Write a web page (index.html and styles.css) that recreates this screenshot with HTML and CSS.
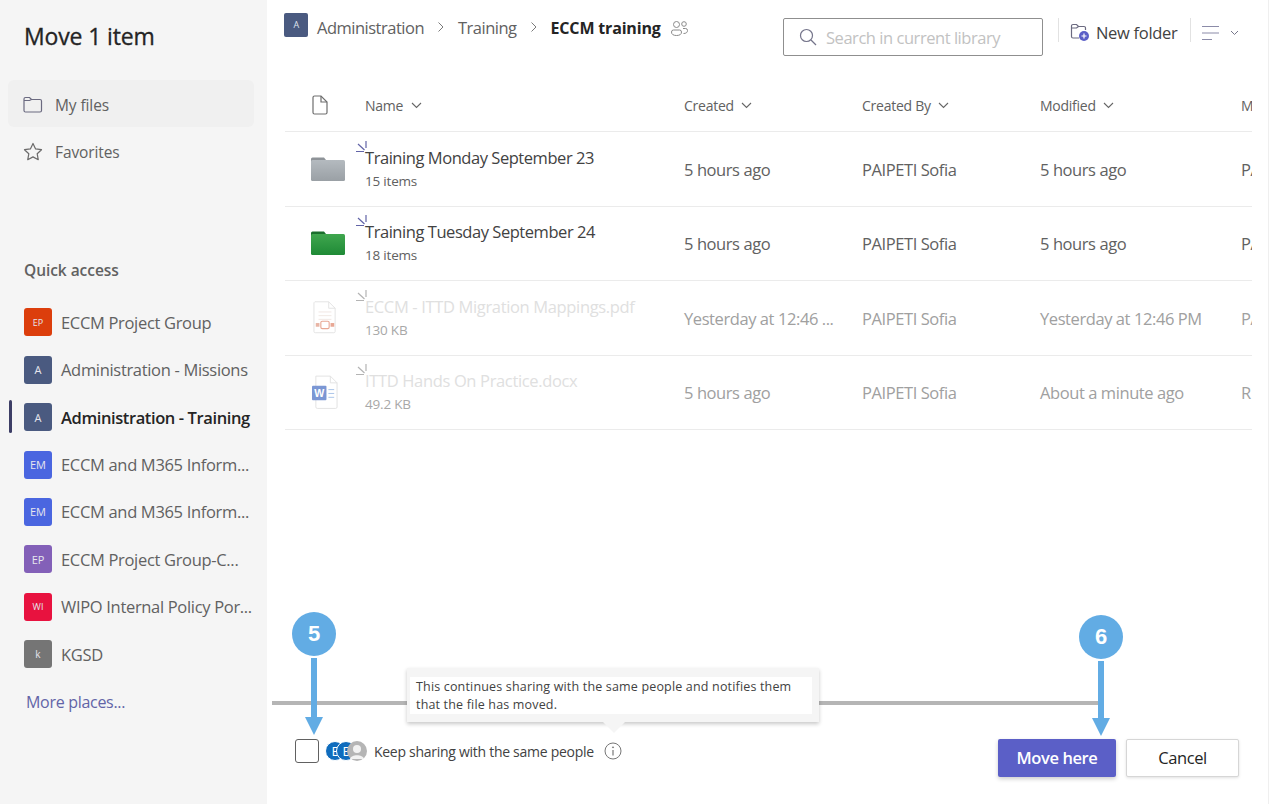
FILE: index.html
```html
<!DOCTYPE html>
<html lang="en">
<head>
    <meta charset="UTF-8">
    <meta name="viewport" content="width=device-width, initial-scale=1.0">
    <title>Move 1 item</title>
    <link rel="stylesheet" href="styles.css">
</head>
<body>
    <div class="dialog">
        <aside class="sidebar">
            <h1 class="dialog-title">Move 1 item</h1>
            <div class="nav-item nav-item-selected">
                <svg class="nav-icon" width="20" height="18" viewBox="0 0 20 18" fill="none" stroke="#6b6a80" stroke-width="1.2"><path d="M1 4.500V3a1.500 1.500 0 0 1 1.500-1.500h4L8.500 3.500H17A1.500 1.500 0 0 1 18.500 5v9.500A1.500 1.500 0 0 1 17 16H2.500A1.500 1.500 0 0 1 1 14.500V4.500H6.500L8.500 3.500"/></svg>
                <span>My files</span>
            </div>
            <div class="nav-item">
                <svg class="nav-icon" width="20" height="19" viewBox="0 0 20 19" fill="none" stroke="#6b6a6a" stroke-width="1.2" stroke-linejoin="round"><path d="M10 1.500l2.600 5.400 5.900.8-4.300 4.100 1.050 5.900L10 14.900l-5.250 2.800 1.050-5.900L1.500 7.700l5.900-.8z"/></svg>
                <span>Favorites</span>
            </div>

            <h2 class="quick-title">Quick access</h2>
            <ul class="place-list">
                <li class="place"><span class="avatar avatar-orange">EP</span><span class="place-name">ECCM Project Group</span></li>
                <li class="place"><span class="avatar avatar-slate">A</span><span class="place-name">Administration - Missions</span></li>
                <li class="place place-active"><span class="avatar avatar-slate">A</span><span class="place-name">Administration - Training</span></li>
                <li class="place"><span class="avatar avatar-blue">EM</span><span class="place-name">ECCM and M365 Inform...</span></li>
                <li class="place"><span class="avatar avatar-blue">EM</span><span class="place-name">ECCM and M365 Inform...</span></li>
                <li class="place"><span class="avatar avatar-purple">EP</span><span class="place-name">ECCM Project Group-C...</span></li>
                <li class="place"><span class="avatar avatar-red">WI</span><span class="place-name">WIPO Internal Policy Por...</span></li>
                <li class="place"><span class="avatar avatar-gray">k</span><span class="place-name">KGSD</span></li>
            </ul>
            <a class="more-places" href="#">More places...</a>
        </aside>

        <main class="content">
            <div class="toolbar">
                <div class="breadcrumb">
                    <span class="crumb-avatar">A</span>
                    <span class="crumb">Administration</span>
                    <svg class="crumb-sep" width="8" height="12" viewBox="0 0 8 12" fill="none" stroke="#7a7a7a" stroke-width="1"><path d="M1.500 1.500L6 6l-4.500 4.500"/></svg>
                    <span class="crumb">Training</span>
                    <svg class="crumb-sep" width="8" height="12" viewBox="0 0 8 12" fill="none" stroke="#7a7a7a" stroke-width="1"><path d="M1.500 1.500L6 6l-4.500 4.500"/></svg>
                    <span class="crumb crumb-current">ECCM training</span>
                    <svg class="crumb-people" width="19" height="17" viewBox="0 0 19 17" fill="none" stroke="#8a8a8a" stroke-width="1"><circle cx="6.500" cy="4.500" r="3"/><circle cx="14" cy="4" r="2.300"/><path d="M1.500 12a2 2 0 0 1 2-2h6a2 2 0 0 1 2 2c0 2.500-2 3.500-5 3.500s-5-1-5-3.500z"/><path d="M13 8.500h2.500a2 2 0 0 1 2 2c0 2-1.500 3-4 3"/></svg>
                </div>
                <div class="tools">
                    <div class="search-box">
                        <svg width="18" height="18" viewBox="0 0 18 18" fill="none" stroke="#74748a" stroke-width="1.200"><circle cx="7.500" cy="7.500" r="6"/><path d="M12 12l5 5"/></svg>
                        <span class="search-text">Search in current library</span>
                    </div>
                    <span class="tool-divider"></span>
                    <button class="new-folder" type="button">
                        <svg width="20" height="19" viewBox="0 0 20 19" fill="none"><path d="M9 15H3a1.500 1.500 0 0 1-1.500-1.500V3A1.500 1.500 0 0 1 3 1.500h3.500l2 2H14A1.500 1.500 0 0 1 15.500 5v2M1.500 5h5l2-1.500" stroke="#6b6a80" stroke-width="1.200"/><circle cx="14" cy="13" r="5" fill="#5b5fc7"/><path d="M14 10.500v5M11.500 13h5" stroke="#fff" stroke-width="1.200"/></svg>
                        <span>New folder</span>
                    </button>
                    <span class="tool-divider tool-divider-short"></span>
                    <svg class="view-icon" width="18" height="16" viewBox="0 0 18 16" fill="none" stroke="#8b8ba8" stroke-width="1"><path d="M0 1.500h17M0 8h17M0 14.500h10"/></svg>
                    <svg class="chev" width="9" height="6" viewBox="0 0 9 6" fill="none" stroke="#77778a" stroke-width="1"><path d="M1 1l3.500 3.500L8 1"/></svg>
                </div>
            </div>

            <div class="file-table">
                <div class="file-row file-head">
                    <div class="cell-icon">
                        <svg width="16" height="20" viewBox="0 0 16 20" fill="none" stroke="#6e6e6e" stroke-width="1.200"><path d="M2.500 1h6.500l6 6v10.500a1.500 1.500 0 0 1-1.500 1.500h-11A1.500 1.500 0 0 1 1 17.500v-15A1.500 1.500 0 0 1 2.500 1z"/><path d="M9 1v6h6"/></svg>
                    </div>
                    <div class="head-cell">Name <svg class="chev" width="11" height="7" viewBox="0 0 11 7" fill="none" stroke="#666" stroke-width="1.100"><path d="M1 1l4.500 4.500L10 1"/></svg></div>
                    <div class="head-cell">Created <svg class="chev" width="11" height="7" viewBox="0 0 11 7" fill="none" stroke="#666" stroke-width="1.100"><path d="M1 1l4.500 4.500L10 1"/></svg></div>
                    <div class="head-cell">Created By <svg class="chev" width="11" height="7" viewBox="0 0 11 7" fill="none" stroke="#666" stroke-width="1.100"><path d="M1 1l4.500 4.500L10 1"/></svg></div>
                    <div class="head-cell">Modified <svg class="chev" width="11" height="7" viewBox="0 0 11 7" fill="none" stroke="#666" stroke-width="1.100"><path d="M1 1l4.500 4.500L10 1"/></svg></div>
                    <div class="head-cell">M</div>
                </div>

                <div class="file-row">
                    <div class="cell-icon">
                        <svg width="34" height="24" viewBox="0 0 34 24"><defs><linearGradient id="folderGray" x1="0" y1="0" x2="0" y2="1"><stop offset="0" stop-color="#b4babf"/><stop offset="1" stop-color="#9aa0a5"/></linearGradient></defs><path d="M0 2a1.500 1.500 0 0 1 1.500-1.500H13l2 2.500V10H0z" fill="#8e9398"/><rect x="0" y="3" width="34" height="21" rx="1.500" fill="url(#folderGray)"/></svg>
                    </div>
                    <div class="cell-name">
                        <svg class="new-mark" width="12" height="12" viewBox="0 0 12 12" fill="none" stroke="#6264a7" stroke-width="1.200"><path d="M0 10.500h8M2 3l6.500 6M10 0v7"/></svg>
                        <div class="file-name">Training Monday September 23</div>
                        <div class="file-meta">15 items</div>
                    </div>
                    <div class="cell">5 hours ago</div>
                    <div class="cell">PAIPETI Sofia</div>
                    <div class="cell">5 hours ago</div>
                    <div class="cell">PA</div>
                </div>

                <div class="file-row">
                    <div class="cell-icon">
                        <svg width="34" height="24" viewBox="0 0 34 24"><defs><linearGradient id="folderGreen" x1="0" y1="0" x2="0" y2="1"><stop offset="0" stop-color="#3fa64e"/><stop offset="1" stop-color="#1f8a36"/></linearGradient></defs><path d="M0 2a1.500 1.500 0 0 1 1.500-1.500H13l2 2.500V10H0z" fill="#1a6e2c"/><rect x="0" y="3" width="34" height="21" rx="1.500" fill="url(#folderGreen)"/></svg>
                    </div>
                    <div class="cell-name">
                        <svg class="new-mark" width="12" height="12" viewBox="0 0 12 12" fill="none" stroke="#6264a7" stroke-width="1.200"><path d="M0 10.500h8M2 3l6.500 6M10 0v7"/></svg>
                        <div class="file-name">Training Tuesday September 24</div>
                        <div class="file-meta">18 items</div>
                    </div>
                    <div class="cell">5 hours ago</div>
                    <div class="cell">PAIPETI Sofia</div>
                    <div class="cell">5 hours ago</div>
                    <div class="cell">PA</div>
                </div>

                <div class="file-row file-disabled">
                    <div class="cell-icon cell-icon-doc">
                        <svg width="24" height="35" viewBox="0 0 26 36" fill="none"><path d="M2 1h15l7 7v25a1.500 1.500 0 0 1-1.500 1.500h-20A1.500 1.500 0 0 1 1 33V2z" fill="#fff" stroke="#e2e2e2"/><path d="M17 1v7h7" stroke="#e2e2e2"/><path d="M6 12h14M6 16h14M6 20h14" stroke="#f0e6e2"/><rect x="8.500" y="22" width="9" height="8" rx="1.500" stroke="#e8a794" stroke-width="1.200"/><rect x="3" y="24" width="4" height="4" fill="#e8b5a5"/><rect x="19" y="24" width="4" height="4" fill="#e8a794"/></svg>
                    </div>
                    <div class="cell-name">
                        <svg class="new-mark" width="12" height="12" viewBox="0 0 12 12" fill="none" stroke="#b4b4b4" stroke-width="1.200"><path d="M0 10.500h8M2 3l6.500 6M10 0v7"/></svg>
                        <div class="file-name">ECCM - ITTD Migration Mappings.pdf</div>
                        <div class="file-meta">130 KB</div>
                    </div>
                    <div class="cell">Yesterday at 12:46 ...</div>
                    <div class="cell">PAIPETI Sofia</div>
                    <div class="cell">Yesterday at 12:46 PM</div>
                    <div class="cell">PA</div>
                </div>

                <div class="file-row file-disabled">
                    <div class="cell-icon cell-icon-doc">
                        <svg width="27" height="35" viewBox="0 0 28 36" fill="none"><path d="M4 1h15l7 7v25a1.500 1.500 0 0 1-1.500 1.500h-19A1.500 1.500 0 0 1 4 33z" fill="#fff" stroke="#e2e2e2"/><path d="M19 1v7h7" stroke="#e2e2e2"/><path d="M17 15h6M17 19h6M17 23h6" stroke="#a9c4e8"/><rect x="0" y="11" width="15" height="15" rx="1" fill="#7b97d4"/><text x="7.500" y="22.500" class="word-letter">W</text></svg>
                    </div>
                    <div class="cell-name">
                        <svg class="new-mark" width="12" height="12" viewBox="0 0 12 12" fill="none" stroke="#b4b4b4" stroke-width="1.200"><path d="M0 10.500h8M2 3l6.500 6M10 0v7"/></svg>
                        <div class="file-name">ITTD Hands On Practice.docx</div>
                        <div class="file-meta">49.2 KB</div>
                    </div>
                    <div class="cell">5 hours ago</div>
                    <div class="cell">PAIPETI Sofia</div>
                    <div class="cell">About a minute ago</div>
                    <div class="cell">R</div>
                </div>
            </div>

            <div class="footer">
                <div class="share-option">
                    <span class="checkbox"></span>
                    <div class="share-avatars">
                        <span class="share-avatar">E</span>
                        <span class="share-avatar">E</span>
                        <span class="share-avatar share-avatar-person">
                            <svg width="20" height="20" viewBox="0 0 20 20"><circle cx="10" cy="10" r="10" fill="#b5b5b5"/><circle cx="10" cy="8" r="4" fill="#f2f2f2"/><path d="M3 18c1-5 13-5 14 0z" fill="#f2f2f2"/></svg>
                        </span>
                    </div>
                    <span class="share-label">Keep sharing with the same people</span>
                    <svg class="info-icon" width="18" height="18" viewBox="0 0 18 18" fill="none" stroke="#777"><circle cx="9" cy="9" r="8"/><path d="M9 8v5.500" stroke-width="1.200"/><circle cx="9" cy="5.300" r=".5" fill="#777"/></svg>
                </div>
                <div class="actions">
                    <button class="btn btn-primary" type="button">Move here</button>
                    <button class="btn btn-default" type="button">Cancel</button>
                </div>
            </div>
        </main>

        <div class="guide-line"></div>

        <div class="tooltip">
            <p class="tooltip-text">This continues sharing with the same people and notifies them that the file has moved.</p>
        </div>

        <div class="callout callout-five">
            <span class="callout-badge">5</span>
            <span class="callout-shaft"></span>
            <span class="callout-head"></span>
        </div>
        <div class="callout callout-six">
            <span class="callout-badge">6</span>
            <span class="callout-shaft"></span>
            <span class="callout-head"></span>
        </div>
    </div>
</body>
</html>
```

FILE: styles.css
```css
* {
    box-sizing: border-box;
}

body {
    margin: 0;
    font-family: "Open Sans", "Noto Sans", Arial, sans-serif;
    color: #242424;
    background-color: #fff;
    overflow: hidden;
}

.dialog {
    position: relative;
    display: flex;
    width: 1269px;
    height: 804px;
    border-right: 1px solid #efefef;
}

/* left column */
.sidebar {
    flex: 0 0 267px;
    background-color: #f5f5f5;
    padding: 20px 8px 0;
}

.dialog-title {
    margin: 0 0 0 16px;
    font-size: 23px;
    line-height: 32px;
    font-weight: 400;
    -webkit-text-stroke: 0.3px #242424;
    letter-spacing: -0.15px;
}

.nav-item {
    display: flex;
    align-items: center;
    gap: 12px;
    width: 246px;
    height: 47px;
    padding: 2px 0 0 15px;
    font-size: 15.500px;
    letter-spacing: -0.1px;
    color: #616161;
}

.nav-item-selected {
    margin-top: 28px;
    background-color: #f0f0f0;
    border-radius: 6px;
}

.quick-title {
    margin: 85px 0 0 16px;
    font-size: 15.500px;
    line-height: 22px;
    font-weight: 600;
    letter-spacing: -0.05px;
    color: #616161;
}

.place-list {
    list-style: none;
    margin: 17.700px 0 0;
    padding: 0;
}

.place {
    position: relative;
    display: flex;
    align-items: center;
    gap: 9px;
    height: 47.400px;
    padding-left: 16px;
    font-size: 16.500px;
    letter-spacing: -0.32px;
    color: #616161;
    white-space: nowrap;
}

.place-active {
    font-weight: 600;
    color: #242424;
    letter-spacing: -0.4px;
}

.place-active::before {
    content: "";
    position: absolute;
    left: 1px;
    top: 7px;
    width: 3px;
    height: 33px;
    border-radius: 2px;
    background-color: #3d3e66;
}

.avatar {
    flex: none;
    display: flex;
    align-items: center;
    justify-content: center;
    width: 28px;
    height: 28px;
    border-radius: 3px;
    font-size: 11px;
    letter-spacing: 0;
    font-weight: 400;
    color: #e6e6ee;
}

.avatar-orange { background-color: #dc3e0c; font-size: 9px; }
.avatar-slate { background-color: #4a5a80; }
.avatar-blue { background-color: #4a66e0; }
.avatar-purple { background-color: #8360b8; }
.avatar-red { background-color: #e8123f; font-size: 9px; }
.avatar-gray { background-color: #757575; font-size: 10px; }

.more-places {
    display: block;
    margin: 12.300px 0 0 18px;
    font-size: 16px;
    line-height: 24px;
    letter-spacing: -0.3px;
    color: #6264a7;
    text-decoration: none;
}

/* right column */
.content {
    flex: 1;
    min-width: 0;
    display: flex;
    flex-direction: column;
    padding-left: 18px;
}

.toolbar {
    display: flex;
    justify-content: space-between;
    height: 80px;
    padding-top: 12px;
}

.breadcrumb {
    display: flex;
    align-items: center;
    height: 32px;
    font-size: 16.500px;
    letter-spacing: -0.5px;
    color: #616161;
}

.crumb-avatar {
    display: flex;
    align-items: center;
    justify-content: center;
    width: 24px;
    height: 24px;
    margin: -7px 9px 0 -1px;
    border-radius: 2px;
    background-color: #4a5a80;
    color: #dfe3ee;
    font-size: 9px;
}

.crumb {
    line-height: 32px;
}

.crumb-sep {
    margin: -3px 13px 0 13px;
}

.crumb-current {
    font-weight: 700;
    font-size: 16px;
    letter-spacing: -0.17px;
    color: #242424;
}

.crumb-people {
    margin-left: 9px;
}

.tools {
    display: flex;
    align-items: flex-start;
    width: 485px;
}

.search-box {
    display: flex;
    align-items: center;
    gap: 9px;
    width: 260px;
    height: 38px;
    margin-top: 6px;
    padding-left: 15px;
    border: 1px solid #8f8f8f;
    border-radius: 2px;
}

.search-text {
    font-size: 16.500px;
    letter-spacing: -0.46px;
    color: #c2c2c2;
}

.tool-divider {
    width: 1px;
    height: 24px;
    margin: 6px 0 0 15px;
    background-color: #e2e2e2;
}

.tool-divider-short {
    margin: 6px 0 0 0;
}

.new-folder {
    display: flex;
    align-items: center;
    gap: 6px;
    height: 26px;
    width: 131px;
    margin-top: 7px;
    padding: 0 0 0 11px;
    border: 0;
    background: none;
    font-family: inherit;
    font-size: 16.500px;
    letter-spacing: -0.3px;
    color: #424242;
}

.view-icon {
    margin: 13px 0 0 11px;
}

.tools .chev {
    margin: 18px 0 0 10px;
}

/* file list */
.file-table {
    width: 967px;
    overflow: hidden;
}

.file-row {
    display: grid;
    grid-template-columns: 80px 319px 178px 178px 201px 60px;
    align-items: center;
    height: 74.500px;
    border-bottom: 1px solid #ebebeb;
    white-space: nowrap;
}

.file-head {
    height: 52px;
    padding-bottom: 1px;
}

.cell-icon {
    display: flex;
    justify-content: center;
    width: 86px;
}

.file-head .cell-icon {
    width: 70px;
}

.cell-icon-doc {
    width: 80px;
}

.head-cell {
    font-size: 14px;
    letter-spacing: -0.25px;
    color: #616161;
}

.head-cell .chev {
    margin: 0 0 2px 4px;
}

.cell-name {
    position: relative;
}

.new-mark {
    position: absolute;
    left: -9px;
    top: -5px;
}

.file-name {
    font-size: 16.500px;
    line-height: 24px;
    letter-spacing: -0.45px;
    color: #424242;
}

.file-meta {
    font-size: 13.500px;
    line-height: 22px;
    letter-spacing: -0.2px;
    color: #616161;
}

.cell {
    padding-top: 1px;
    font-size: 16.500px;
    letter-spacing: -0.42px;
    color: #616161;
}

.file-disabled .file-name {
    letter-spacing: -0.35px;
    color: #e0e0e0;
}

.file-disabled .file-meta {
    color: #a8a8a8;
}

.file-disabled .cell {
    color: #a0a0a0;
}

.word-letter {
    font-family: "Liberation Sans", Arial, sans-serif;
    font-size: 11px;
    font-weight: 700;
    fill: #fff;
    text-anchor: middle;
}

/* bottom bar */
.footer {
    display: flex;
    justify-content: space-between;
    margin-top: auto;
    height: 65px;
    padding: 0 29px 0 10px;
}

.share-option {
    display: flex;
    align-items: center;
    height: 24px;
}

.checkbox {
    width: 24px;
    height: 24px;
    border: 1.500px solid #616161;
    border-radius: 3px;
    background-color: #fff;
}

.share-avatars {
    display: flex;
    margin-left: 6px;
}

.share-avatar {
    display: flex;
    align-items: center;
    justify-content: center;
    width: 20px;
    height: 20px;
    margin-right: -9px;
    border-radius: 50%;
    border: 1px solid #fff;
    background-color: #0f6cbd;
    color: #fff;
    font-size: 13px;
}

.share-avatar-person {
    margin-right: 0;
    padding: 0;
    border: 0;
    background: none;
}

.share-label {
    margin-left: 7px;
    font-size: 14px;
    letter-spacing: -0.28px;
    color: #424242;
}

.info-icon {
    margin-left: 10px;
}

.actions {
    display: flex;
    gap: 10px;
}

.btn {
    width: 118px;
    height: 38px;
    padding: 0 0 2px;
    border-radius: 2px;
    font-family: inherit;
    font-size: 16.500px;
    letter-spacing: -0.4px;
}

.btn-primary {
    border: 0;
    background-color: #5b5fc7;
    color: #fff;
    font-weight: 600;
    box-shadow: 0 2px 4px rgba(0, 0, 0, 0.2);
}

.btn-default {
    width: 113px;
    border: 1px solid #d6d6d6;
    background-color: #fff;
    color: #242424;
    box-shadow: 0 1px 3px rgba(0, 0, 0, 0.12);
}

/* annotations drawn over the screenshot */
.guide-line {
    position: absolute;
    left: 272px;
    top: 701px;
    width: 828px;
    height: 4px;
    background-color: #b5b5b5;
}

.tooltip {
    position: absolute;
    left: 407px;
    top: 668px;
    width: 412px;
    height: 54px;
    padding: 9px 7px 8px 3px;
    background-color: #f5f5f5;
    box-shadow: 0 2px 4px rgba(0, 0, 0, 0.22);
}

.tooltip::after {
    content: "";
    position: absolute;
    left: 196px;
    bottom: -11px;
    border: 11px solid transparent;
    border-bottom: 0;
    border-top-color: #f5f5f5;
}

.tooltip-text {
    margin: 0;
    padding: 1px 6px;
    background-color: #fff;
    font-size: 12.500px;
    line-height: 17.500px;
    letter-spacing: 0.17px;
    color: #424242;
}

.callout {
    position: absolute;
    display: flex;
    flex-direction: column;
    align-items: center;
    width: 44px;
}

.callout-five {
    left: 292px;
    top: 612px;
}

.callout-six {
    left: 1079px;
    top: 615px;
}

.callout-badge {
    width: 44px;
    height: 44px;
    border-radius: 50%;
    background-color: #62ace4;
    color: #fff;
    font-family: "Liberation Sans", Arial, sans-serif;
    font-size: 22px;
    font-weight: 700;
    line-height: 44px;
    text-align: center;
}

.callout-shaft {
    width: 6px;
    height: 59px;
    margin-top: 2px;
    background-color: #62ace4;
}

.callout-head {
    width: 0;
    height: 0;
    border: 9px solid transparent;
    border-top: 18px solid #62ace4;
    border-bottom: 0;
}

.callout-six .callout-shaft {
    height: 57px;
}
```
